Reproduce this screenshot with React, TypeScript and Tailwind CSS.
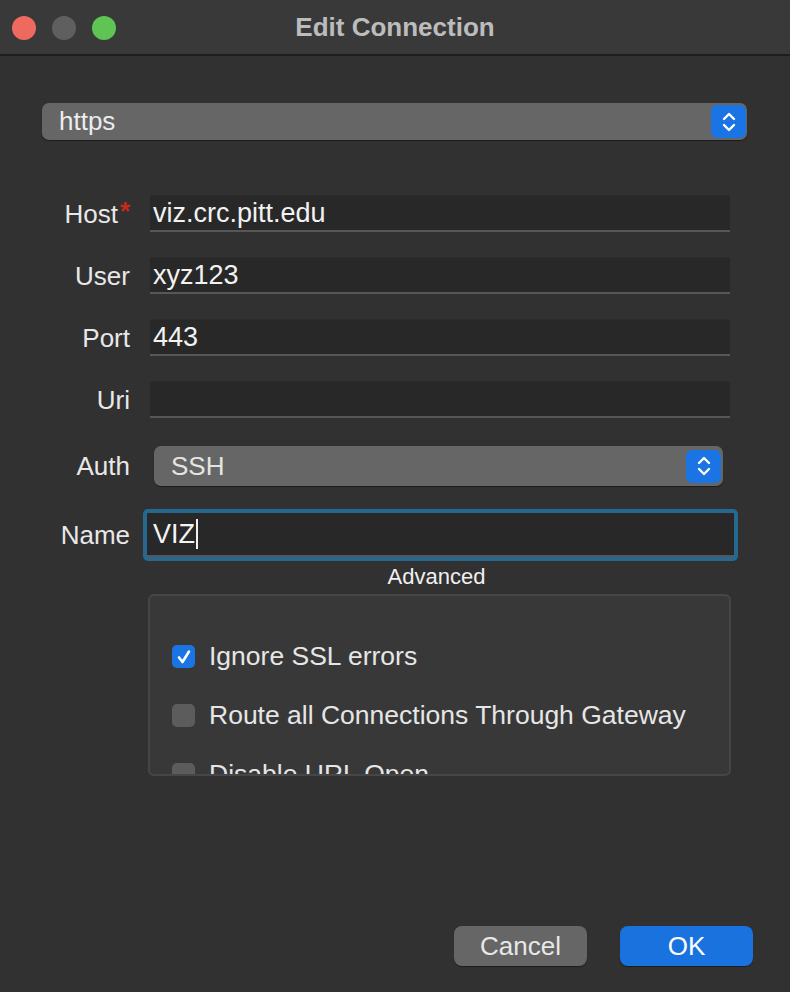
import React from 'react';

const font = { fontFamily: '"Liberation Sans", Arial, sans-serif' };

const Stepper = () => (
  <div className="w-[35px] h-[33px] rounded-[6px] bg-[#1b74e4] flex items-center justify-center">
    <svg width="16" height="24" viewBox="0 0 16 24" fill="none" stroke="#ffffff" strokeWidth="2.4" strokeLinecap="round" strokeLinejoin="round">
      <path d="M3 9 L8 4 L13 9" />
      <path d="M3 15 L8 20 L13 15" />
    </svg>
  </div>
);

const Field = ({ label, value, required }: { label: string; value: string; required?: boolean }) => (
  <div className="flex items-center h-[37px]">
    <div className={`w-[130px] text-right text-[26px] leading-none text-[#e8e8e8] ${required ? 'pr-[12px]' : 'pr-0'} relative`}>
      {label}
      {required && <span className="absolute right-0 top-[-3px] text-[#c42b1c] text-[26px] font-bold">*</span>}
    </div>
    <div className="ml-[20px] w-[580px] h-[37px] bg-[#282828] border-b-2 border-[#575757] border-t border-t-[#2c2c2c] flex items-center pl-[3px] text-[27px] text-[#f2f2f2]">
      {value}
    </div>
  </div>
);

const Check = ({ checked, label }: { checked?: boolean; label: string }) => (
  <div className="flex items-center gap-[14px] h-[39px] shrink-0">
    <div className={`w-[23px] h-[23px] rounded-[5px] flex items-center justify-center ${checked ? 'bg-[#1b74e4]' : 'bg-[#5c5c5c]'}`}>
      {checked && (
        <svg width="16" height="16" viewBox="0 0 16 16" fill="none" stroke="#ffffff" strokeWidth="2.6" strokeLinecap="round" strokeLinejoin="round">
          <path d="M3 8.5 L6.5 13 L13 2.5" />
        </svg>
      )}
    </div>
    <span className="text-[26.5px] text-[#e6e6e6]">{label}</span>
  </div>
);

export default function App() {
  return (
    <div className="w-[790px] h-[992px] bg-[#313131] flex flex-col overflow-hidden" style={font}>
      {/* Title bar */}
      <div className="h-[56px] bg-[#393939] border-b-2 border-[#1e1e1e] relative flex items-center justify-center shrink-0">
        <div className="absolute left-[12px] top-[16px] flex gap-[16px]">
          <div className="w-[24px] h-[24px] rounded-full bg-[#ee6a5f]" />
          <div className="w-[24px] h-[24px] rounded-full bg-[#5f5f5f]" />
          <div className="w-[24px] h-[24px] rounded-full bg-[#5ec454]" />
        </div>
        <span className="text-[26px] font-bold text-[#bcbcbc]">Edit Connection</span>
      </div>

      <div className="flex flex-col pt-[47px]">
        {/* Protocol combo */}
        <div className="ml-[42px] w-[705px] h-[37px] rounded-[7px] bg-[#666666] flex items-center justify-between pl-[17px] pr-[1px] shadow-[0_1px_1px_rgba(0,0,0,0.4)]">
          <span className="text-[26px] text-[#ececec]">https</span>
          <Stepper />
        </div>

        <div className="flex flex-col gap-[25px] mt-[55px]">
          <Field label="Host" value="viz.crc.pitt.edu" required />
          <Field label="User" value="xyz123" />
          <Field label="Port" value="443" />
          <Field label="Uri" value="" />
        </div>

        {/* Auth */}
        <div className="flex items-center mt-[28px]">
          <div className="w-[130px] text-right text-[26px] leading-none text-[#e8e8e8]">Auth</div>
          <div className="ml-[24px] w-[569px] h-[40px] rounded-[7px] bg-[#666666] flex items-center justify-between pl-[17px] pr-[2px] shadow-[0_1px_1px_rgba(0,0,0,0.4)]">
            <span className="text-[26px] text-[#e4e4e4]">SSH</span>
            <Stepper />
          </div>
        </div>

        {/* Name */}
        <div className="flex items-center mt-[23px]">
          <div className="w-[130px] text-right text-[26px] leading-none text-[#e8e8e8]">Name</div>
          <div className="ml-[13px] w-[595px] h-[52px] rounded-[5px] bg-[#276890] p-[4px]">
            <div className="w-full h-full bg-[#282828] border-b-2 border-[#575757] flex items-center pl-[6px] text-[27px] text-[#f4f4f4]">
              VIZ<span className="w-[1.5px] h-[30px] bg-[#f0f0f0] ml-[1px]" />
            </div>
          </div>
        </div>

        <div className="ml-[148px] w-[577px] text-center text-[22px] text-[#f0f0f0] mt-[4px] leading-[24px]">Advanced</div>

        {/* Advanced group */}
        <div className="ml-[148px] mt-[5px] w-[583px] h-[182px] rounded-[6px] border-2 border-[#464646] bg-[#383838] overflow-hidden pl-[22px] pt-[41px] flex flex-col gap-[20px]">
          <Check checked label="Ignore SSL errors" />
          <Check label="Route all Connections Through Gateway" />
          <Check label="Disable URL Open" />
        </div>
      </div>

      {/* Buttons */}
      <div className="mt-auto mb-[26px] flex justify-end gap-[33px] pr-[37px]">
        <button className="w-[133px] h-[40px] rounded-[8px] bg-[#666666] text-[26px] text-[#e8e8e8] shadow-[0_1px_1px_rgba(0,0,0,0.4)]">Cancel</button>
        <button className="w-[133px] h-[40px] rounded-[8px] bg-[#1a72df] text-[26px] text-white shadow-[0_1px_1px_rgba(0,0,0,0.4)]">OK</button>
      </div>
    </div>
  );
}
